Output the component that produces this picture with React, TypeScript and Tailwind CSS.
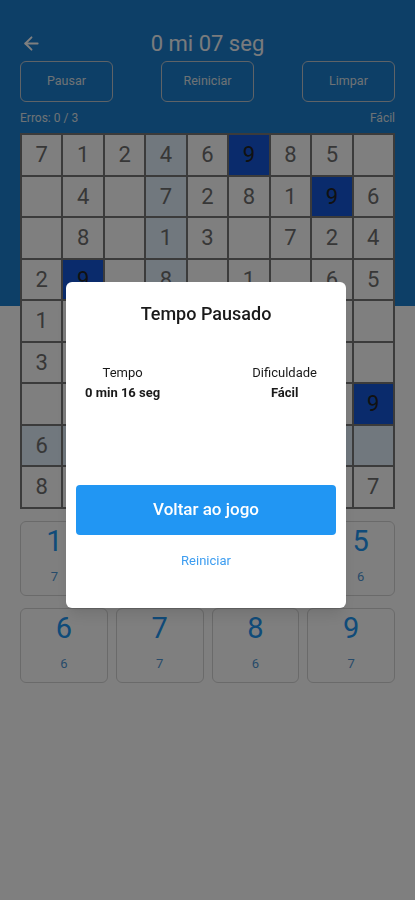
import { ArrowLeft } from "lucide-react";

// rows 5-9, cols 2-8 sit under the pause dialog
const board: (number | null)[][] = [
  [7, 1, 2, 4, 6, 9, 8, 5, null],
  [null, 4, null, 7, 2, 8, 1, 9, 6],
  [null, 8, null, 1, 3, null, 7, 2, 4],
  [2, 9, null, 8, null, 1, null, 6, 5],
  [1, null, null, null, null, null, null, null, null],
  [3, null, null, null, null, null, null, null, null],
  [null, null, null, null, null, null, null, null, 9],
  [6, null, null, null, null, null, null, null, null],
  [8, null, null, null, null, null, null, null, 7],
];

const selRow = 7;
const selCol = 3;
const selValue = 9;

const counts = [7, 6, 7, 7, 6, 6, 7, 6, 7];

const Cell = ({ value, r, c }: { value: number | null; r: number; c: number }) => {
  const same = value === selValue;
  const related = r === selRow || c === selCol;
  const bg = same ? "bg-[#1557d8]" : related ? "bg-[#e2f0fc]" : "bg-white";
  const text = same ? "text-[#222222]" : "text-[#6e6e6e]";
  return (
    <div className={`flex h-[39.5px] items-center justify-center text-[22px] ${bg} ${text}`}>
      {value ?? ""}
    </div>
  );
};

const Key = ({ n, count }: { n: number; count: number }) => (
  <button className="flex h-[75px] flex-1 flex-col items-center rounded-[6px] border border-[#d4d4d4] bg-white">
    <span className="mt-[2px] text-[29px] leading-[34px] text-[#2196f3]">{n}</span>
    <span className="mt-[11px] text-[13px] leading-[16px] text-[#4f96d4]">{count}</span>
  </button>
);

const App = () => {
  return (
    <div className="relative min-h-[900px] bg-[linear-gradient(to_bottom,#1a7ecf_306px,#ffffff_306px)] px-[20px] pt-[28px] font-['Roboto','Liberation_Sans',sans-serif]">
      <div className="relative flex h-[30px] items-center">
        <ArrowLeft className="ml-[1px] h-[21px] w-[21px] text-white" strokeWidth={2.2} />
        <div className="absolute inset-0 flex items-center justify-center text-[22px] text-[#f2f6fa]">
          0 mi 07 seg
        </div>
      </div>
      <div className="mt-[3px] flex justify-between">
        {["Pausar", "Reiniciar", "Limpar"].map((label) => (
          <button
            key={label}
            className="h-[41px] w-[93px] rounded-[6px] border border-[#bfc7cf] text-[12.5px] text-[#dde4ea]"
          >
            {label}
          </button>
        ))}
      </div>
      <div className="mt-[8px] flex h-[16px] items-center justify-between text-[12px] text-[#dde4ea]">
        <span>Erros: 0 / 3</span>
        <span>Fácil</span>
      </div>
      <div className="mt-[7px] grid grid-cols-9 gap-[2px] bg-[#777777] p-[2px]">
        {board.map((row, r) => row.map((v, c) => <Cell key={`${r}-${c}`} value={v} r={r} c={c} />))}
      </div>
      <div className="mt-[12px] flex gap-[8px]">
        {[1, 2, 3, 4, 5].map((n) => (
          <Key key={n} n={n} count={counts[n - 1]} />
        ))}
      </div>
      <div className="mt-[12px] flex gap-[8px]">
        {[6, 7, 8, 9].map((n) => (
          <Key key={n} n={n} count={counts[n - 1]} />
        ))}
      </div>

      <div className="fixed inset-0 z-10 flex justify-center bg-black/50 pt-[282px]">
        <div className="ml-[-3px] flex h-[326px] w-[280px] flex-col items-center rounded-[6px] bg-white shadow-lg">
          <div className="mt-[20px] text-[18px] font-medium leading-[24px] text-[#1a1a1a]">Tempo Pausado</div>
          <div className="mt-[38px] flex w-full justify-between pl-[19px] pr-[29px] text-[13px] text-[#1a1a1a]">
            <div className="flex flex-col items-center">
              <span className="leading-[18px]">Tempo</span>
              <span className="mt-[2px] font-bold leading-[18px]">0 min 16 seg</span>
            </div>
            <div className="flex flex-col items-center">
              <span className="leading-[18px]">Dificuldade</span>
              <span className="mt-[2px] font-bold leading-[18px]">Fácil</span>
            </div>
          </div>
          <button className="mt-[83px] h-[50px] w-[260px] rounded-[4px] bg-[#2196f3] text-[17px] font-medium text-white">
            Voltar ao jogo
          </button>
          <button className="mt-[17px] text-[13px] leading-[18px] text-[#3d9df0]">Reiniciar</button>
        </div>
      </div>
    </div>
  );
};

export default App;
